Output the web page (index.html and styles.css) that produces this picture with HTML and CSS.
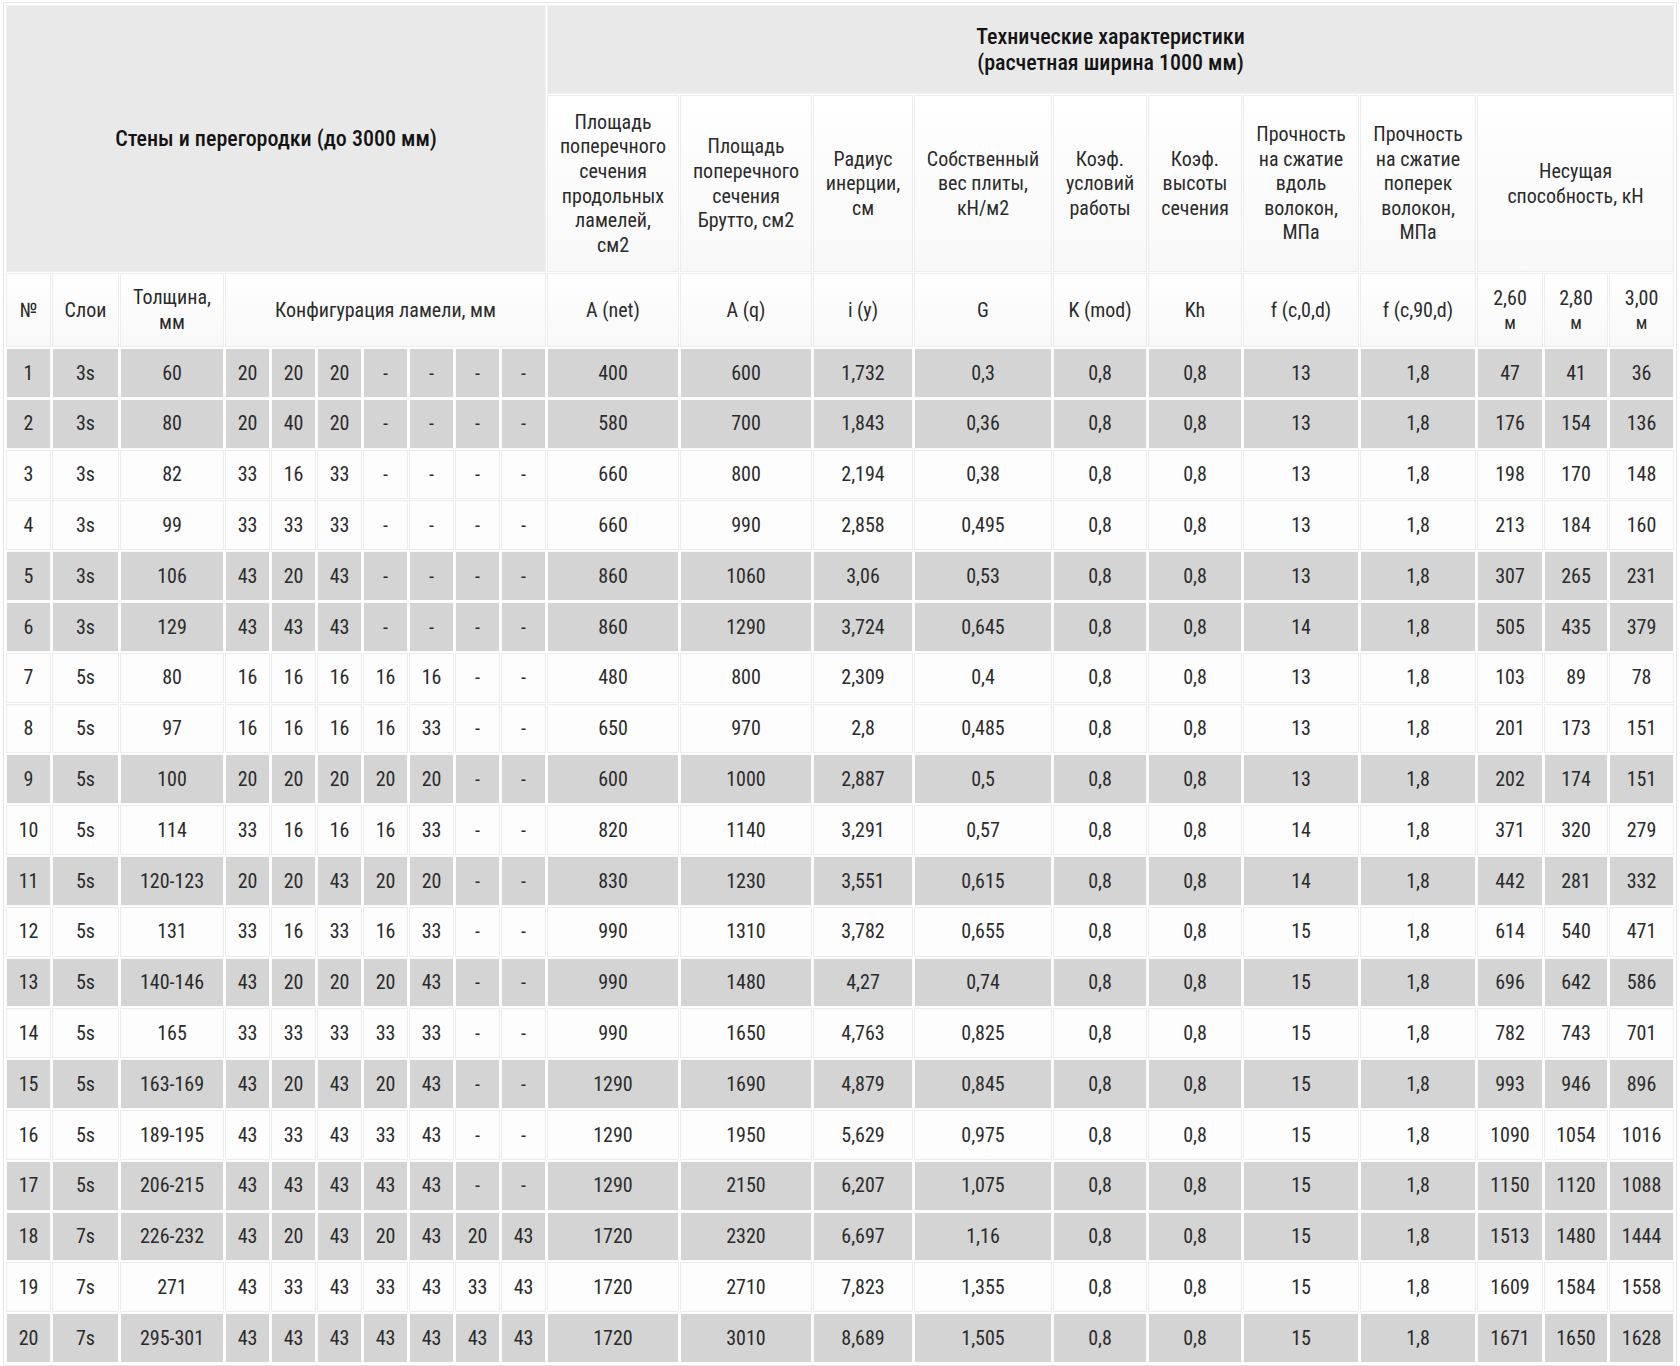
FILE: index.html
```html
<!DOCTYPE html>
<html lang="ru">
<head>
<meta charset="utf-8">
<title>Стены и перегородки</title>
<link rel="stylesheet" href="styles.css">
</head>
<body>
<div class="frame">
<table class="spec">
<colgroup>
<col class="c-num"><col class="c-layers"><col class="c-thick">
<col class="c-lam"><col class="c-lam"><col class="c-lam"><col class="c-lam"><col class="c-lam"><col class="c-lam"><col class="c-lam">
<col class="c-anet"><col class="c-aq"><col class="c-iy"><col class="c-g"><col class="c-kmod"><col class="c-kh"><col class="c-f0"><col class="c-f90">
<col class="c-l260"><col class="c-l280"><col class="c-l300">
</colgroup>
<thead>
<tr class="h1">
<th class="title" colspan="10" rowspan="2">Стены и перегородки (до 3000 мм)</th>
<th class="title" colspan="11">Технические характеристики<br>(расчетная ширина 1000 мм)</th>
</tr>
<tr class="h2">
<th class="sub">Площадь<br>поперечного<br>сечения<br>продольных<br>ламелей,<br>см2</th>
<th class="sub">Площадь<br>поперечного<br>сечения<br>Брутто, см2</th>
<th class="sub">Радиус<br>инерции,<br>см</th>
<th class="sub">Собственный<br>вес плиты,<br>кН/м2</th>
<th class="sub">Коэф.<br>условий<br>работы</th>
<th class="sub">Коэф.<br>высоты<br>сечения</th>
<th class="sub">Прочность<br>на сжатие<br>вдоль<br>волокон,<br>МПа</th>
<th class="sub">Прочность<br>на сжатие<br>поперек<br>волокон,<br>МПа</th>
<th class="sub" colspan="3">Несущая<br>способность, кН</th>
</tr>
<tr class="h3">
<th class="sub">№</th>
<th class="sub">Слои</th>
<th class="sub">Толщина,<br>мм</th>
<th class="sub" colspan="7">Конфигурация ламели, мм</th>
<th class="sub">A (net)</th>
<th class="sub">A (q)</th>
<th class="sub">i (y)</th>
<th class="sub">G</th>
<th class="sub">K (mod)</th>
<th class="sub">Kh</th>
<th class="sub">f (c,0,d)</th>
<th class="sub">f (c,90,d)</th>
<th class="sub len">2,60<br><span class="unit">м</span></th>
<th class="sub len">2,80<br><span class="unit">м</span></th>
<th class="sub len">3,00<br><span class="unit">м</span></th>
</tr>
</thead>
<tbody>
<tr class="dark"><td>1</td><td>3s</td><td>60</td><td>20</td><td>20</td><td>20</td><td>-</td><td>-</td><td>-</td><td>-</td><td>400</td><td>600</td><td>1,732</td><td>0,3</td><td>0,8</td><td>0,8</td><td>13</td><td>1,8</td><td>47</td><td>41</td><td>36</td></tr>
<tr class="dark"><td>2</td><td>3s</td><td>80</td><td>20</td><td>40</td><td>20</td><td>-</td><td>-</td><td>-</td><td>-</td><td>580</td><td>700</td><td>1,843</td><td>0,36</td><td>0,8</td><td>0,8</td><td>13</td><td>1,8</td><td>176</td><td>154</td><td>136</td></tr>
<tr class="light"><td>3</td><td>3s</td><td>82</td><td>33</td><td>16</td><td>33</td><td>-</td><td>-</td><td>-</td><td>-</td><td>660</td><td>800</td><td>2,194</td><td>0,38</td><td>0,8</td><td>0,8</td><td>13</td><td>1,8</td><td>198</td><td>170</td><td>148</td></tr>
<tr class="light"><td>4</td><td>3s</td><td>99</td><td>33</td><td>33</td><td>33</td><td>-</td><td>-</td><td>-</td><td>-</td><td>660</td><td>990</td><td>2,858</td><td>0,495</td><td>0,8</td><td>0,8</td><td>13</td><td>1,8</td><td>213</td><td>184</td><td>160</td></tr>
<tr class="dark"><td>5</td><td>3s</td><td>106</td><td>43</td><td>20</td><td>43</td><td>-</td><td>-</td><td>-</td><td>-</td><td>860</td><td>1060</td><td>3,06</td><td>0,53</td><td>0,8</td><td>0,8</td><td>13</td><td>1,8</td><td>307</td><td>265</td><td>231</td></tr>
<tr class="dark"><td>6</td><td>3s</td><td>129</td><td>43</td><td>43</td><td>43</td><td>-</td><td>-</td><td>-</td><td>-</td><td>860</td><td>1290</td><td>3,724</td><td>0,645</td><td>0,8</td><td>0,8</td><td>14</td><td>1,8</td><td>505</td><td>435</td><td>379</td></tr>
<tr class="light"><td>7</td><td>5s</td><td>80</td><td>16</td><td>16</td><td>16</td><td>16</td><td>16</td><td>-</td><td>-</td><td>480</td><td>800</td><td>2,309</td><td>0,4</td><td>0,8</td><td>0,8</td><td>13</td><td>1,8</td><td>103</td><td>89</td><td>78</td></tr>
<tr class="light"><td>8</td><td>5s</td><td>97</td><td>16</td><td>16</td><td>16</td><td>16</td><td>33</td><td>-</td><td>-</td><td>650</td><td>970</td><td>2,8</td><td>0,485</td><td>0,8</td><td>0,8</td><td>13</td><td>1,8</td><td>201</td><td>173</td><td>151</td></tr>
<tr class="dark"><td>9</td><td>5s</td><td>100</td><td>20</td><td>20</td><td>20</td><td>20</td><td>20</td><td>-</td><td>-</td><td>600</td><td>1000</td><td>2,887</td><td>0,5</td><td>0,8</td><td>0,8</td><td>13</td><td>1,8</td><td>202</td><td>174</td><td>151</td></tr>
<tr class="light"><td>10</td><td>5s</td><td>114</td><td>33</td><td>16</td><td>16</td><td>16</td><td>33</td><td>-</td><td>-</td><td>820</td><td>1140</td><td>3,291</td><td>0,57</td><td>0,8</td><td>0,8</td><td>14</td><td>1,8</td><td>371</td><td>320</td><td>279</td></tr>
<tr class="dark"><td>11</td><td>5s</td><td>120-123</td><td>20</td><td>20</td><td>43</td><td>20</td><td>20</td><td>-</td><td>-</td><td>830</td><td>1230</td><td>3,551</td><td>0,615</td><td>0,8</td><td>0,8</td><td>14</td><td>1,8</td><td>442</td><td>281</td><td>332</td></tr>
<tr class="light"><td>12</td><td>5s</td><td>131</td><td>33</td><td>16</td><td>33</td><td>16</td><td>33</td><td>-</td><td>-</td><td>990</td><td>1310</td><td>3,782</td><td>0,655</td><td>0,8</td><td>0,8</td><td>15</td><td>1,8</td><td>614</td><td>540</td><td>471</td></tr>
<tr class="dark"><td>13</td><td>5s</td><td>140-146</td><td>43</td><td>20</td><td>20</td><td>20</td><td>43</td><td>-</td><td>-</td><td>990</td><td>1480</td><td>4,27</td><td>0,74</td><td>0,8</td><td>0,8</td><td>15</td><td>1,8</td><td>696</td><td>642</td><td>586</td></tr>
<tr class="light"><td>14</td><td>5s</td><td>165</td><td>33</td><td>33</td><td>33</td><td>33</td><td>33</td><td>-</td><td>-</td><td>990</td><td>1650</td><td>4,763</td><td>0,825</td><td>0,8</td><td>0,8</td><td>15</td><td>1,8</td><td>782</td><td>743</td><td>701</td></tr>
<tr class="dark"><td>15</td><td>5s</td><td>163-169</td><td>43</td><td>20</td><td>43</td><td>20</td><td>43</td><td>-</td><td>-</td><td>1290</td><td>1690</td><td>4,879</td><td>0,845</td><td>0,8</td><td>0,8</td><td>15</td><td>1,8</td><td>993</td><td>946</td><td>896</td></tr>
<tr class="light"><td>16</td><td>5s</td><td>189-195</td><td>43</td><td>33</td><td>43</td><td>33</td><td>43</td><td>-</td><td>-</td><td>1290</td><td>1950</td><td>5,629</td><td>0,975</td><td>0,8</td><td>0,8</td><td>15</td><td>1,8</td><td>1090</td><td>1054</td><td>1016</td></tr>
<tr class="dark"><td>17</td><td>5s</td><td>206-215</td><td>43</td><td>43</td><td>43</td><td>43</td><td>43</td><td>-</td><td>-</td><td>1290</td><td>2150</td><td>6,207</td><td>1,075</td><td>0,8</td><td>0,8</td><td>15</td><td>1,8</td><td>1150</td><td>1120</td><td>1088</td></tr>
<tr class="dark"><td>18</td><td>7s</td><td>226-232</td><td>43</td><td>20</td><td>43</td><td>20</td><td>43</td><td>20</td><td>43</td><td>1720</td><td>2320</td><td>6,697</td><td>1,16</td><td>0,8</td><td>0,8</td><td>15</td><td>1,8</td><td>1513</td><td>1480</td><td>1444</td></tr>
<tr class="light"><td>19</td><td>7s</td><td>271</td><td>43</td><td>33</td><td>43</td><td>33</td><td>43</td><td>33</td><td>43</td><td>1720</td><td>2710</td><td>7,823</td><td>1,355</td><td>0,8</td><td>0,8</td><td>15</td><td>1,8</td><td>1609</td><td>1584</td><td>1558</td></tr>
<tr class="dark"><td>20</td><td>7s</td><td>295-301</td><td>43</td><td>43</td><td>43</td><td>43</td><td>43</td><td>43</td><td>43</td><td>1720</td><td>3010</td><td>8,689</td><td>1,505</td><td>0,8</td><td>0,8</td><td>15</td><td>1,8</td><td>1671</td><td>1650</td><td>1628</td></tr>
</tbody>
</table>
</div>
</body>
</html>
```

FILE: styles.css
```css
html, body {
  margin: 0;
  padding: 0;
  background: #ffffff;
}

body {
  font-family: "Roboto Condensed", "Roboto", "Liberation Sans Narrow", sans-serif;
  font-stretch: 75%;
  color: #2b2b2b;
}

.frame {
  margin: 2px 0 0 3px;
  border: 1px solid #e4e4e4;
  padding: 1px;
  width: fit-content;
}

.spec {
  border-collapse: separate;
  border-spacing: 1px;
  table-layout: fixed;
  width: 1670px;
  font-size: 20px;
  font-weight: 400;
  line-height: 1.23;
  text-align: center;
}

.c-num { width: 45px; }
.c-layers { width: 67px; }
.c-thick { width: 104px; }
.c-lam { width: 45px; }
.c-anet { width: 132px; }
.c-aq { width: 132px; }
.c-iy { width: 100px; }
.c-g { width: 138px; }
.c-kmod { width: 94px; }
.c-kh { width: 94px; }
.c-f0 { width: 116px; }
.c-f90 { width: 116px; }
.c-l260 { width: 66px; }
.c-l280 { width: 64px; }
.c-l300 { width: 65px; }

.spec th,
.spec td {
  padding: 0 2px;
  vertical-align: middle;
  text-align: center;
  font-weight: 400;
}

.h1 { height: 89px; }
.h2 { height: 177px; }
.h3 { height: 74px; }

.spec th.title {
  background: #e9e9e9;
  border: 1px solid #f1f1f1;
  font-size: 22px;
  font-weight: 500;
  line-height: 1.15;
  color: #141414;
}

.spec th.sub {
  background: linear-gradient(#ffffff, #f8f8f8);
  border: 1px solid #ececec;
}

.len {
  line-height: 1.2;
}

.unit {
  font-size: 18px;
}

.spec tbody tr {
  height: 49.8px;
}

.dark td {
  background: #d4d4d4;
  border: 1px solid #fbfbfb;
}

.light td {
  background: #fdfdfd;
  border: 1px solid #ececec;
}
```
